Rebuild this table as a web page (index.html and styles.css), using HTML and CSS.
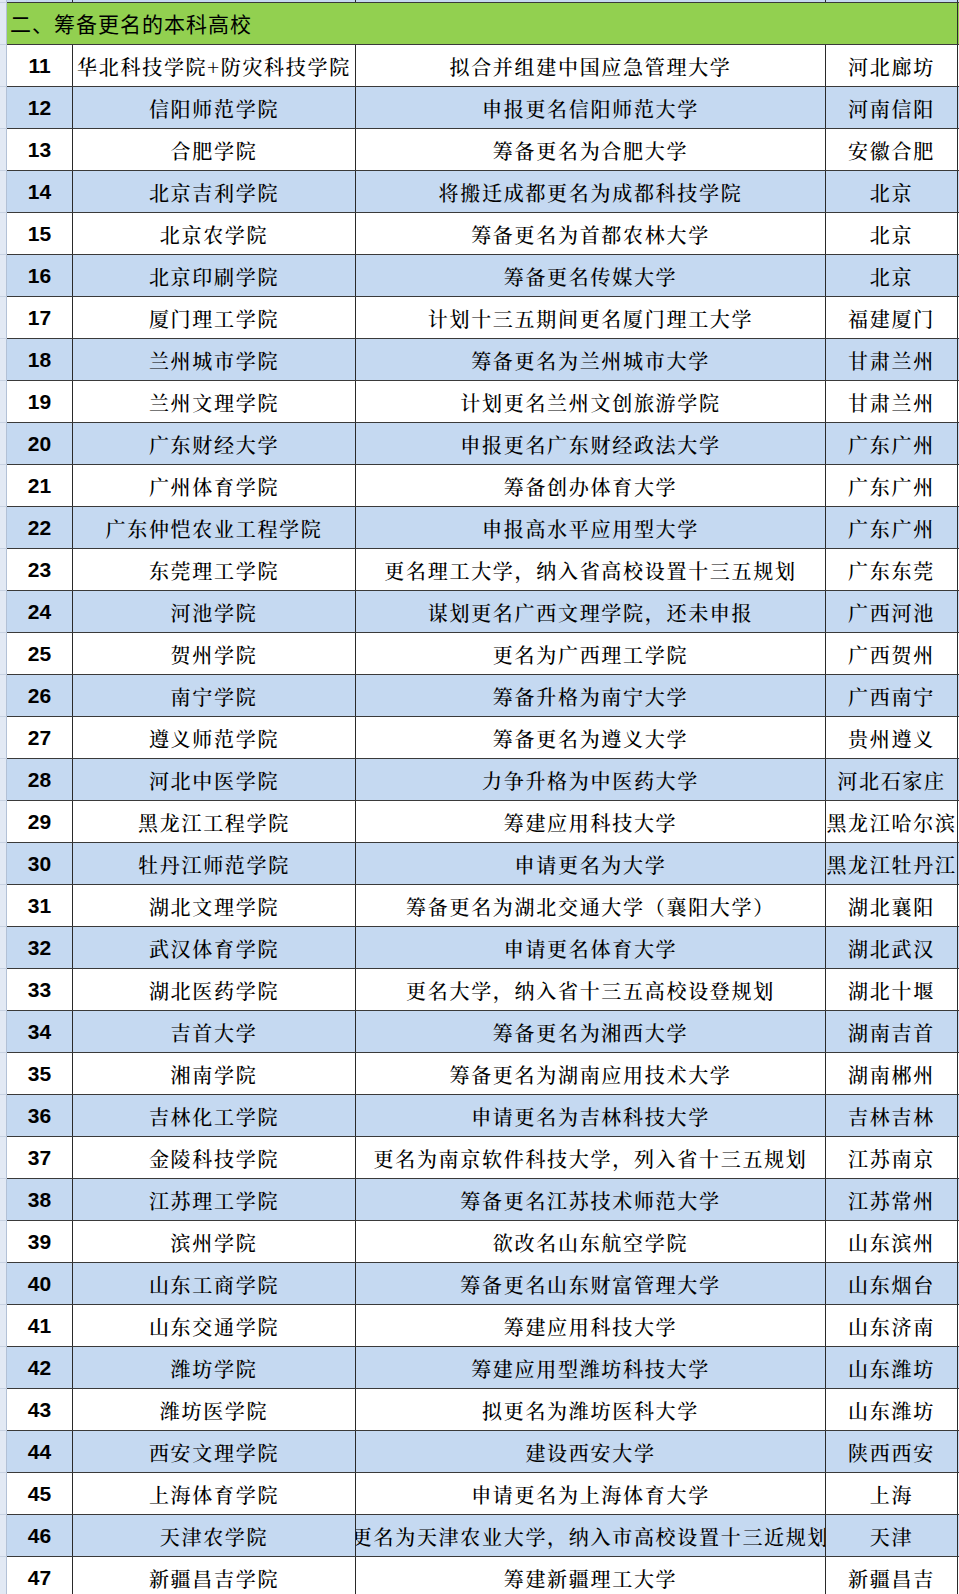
FILE: index.html
```html
<!DOCTYPE html>
<html lang="zh-CN">
<head>
<meta charset="utf-8">
<title>筹备更名的本科高校</title>
<link rel="stylesheet" href="styles.css">
</head>
<body>
<div class="sheet">
  <div class="row row-top alt">
    <div class="gutter"></div><div class="cell"></div><div class="cell"></div><div class="cell"></div><div class="cell"></div>
  </div>
  <div class="row row-head">
    <div class="gutter"></div>
    <div class="cell head-cell">二、筹备更名的本科高校</div>
  </div>

  <div class="row"><div class="gutter"></div><div class="cell num">11</div><div class="cell txt"><span>华北科技学院+防灾科技学院</span></div><div class="cell txt"><span>拟合并组建中国应急管理大学</span></div><div class="cell txt"><span>河北廊坊</span></div></div>
  <div class="row alt"><div class="gutter"></div><div class="cell num">12</div><div class="cell txt"><span>信阳师范学院</span></div><div class="cell txt"><span>申报更名信阳师范大学</span></div><div class="cell txt"><span>河南信阳</span></div></div>
  <div class="row"><div class="gutter"></div><div class="cell num">13</div><div class="cell txt"><span>合肥学院</span></div><div class="cell txt"><span>筹备更名为合肥大学</span></div><div class="cell txt"><span>安徽合肥</span></div></div>
  <div class="row alt"><div class="gutter"></div><div class="cell num">14</div><div class="cell txt"><span>北京吉利学院</span></div><div class="cell txt"><span>将搬迁成都更名为成都科技学院</span></div><div class="cell txt"><span>北京</span></div></div>
  <div class="row"><div class="gutter"></div><div class="cell num">15</div><div class="cell txt"><span>北京农学院</span></div><div class="cell txt"><span>筹备更名为首都农林大学</span></div><div class="cell txt"><span>北京</span></div></div>
  <div class="row alt"><div class="gutter"></div><div class="cell num">16</div><div class="cell txt"><span>北京印刷学院</span></div><div class="cell txt"><span>筹备更名传媒大学</span></div><div class="cell txt"><span>北京</span></div></div>
  <div class="row"><div class="gutter"></div><div class="cell num">17</div><div class="cell txt"><span>厦门理工学院</span></div><div class="cell txt"><span>计划十三五期间更名厦门理工大学</span></div><div class="cell txt"><span>福建厦门</span></div></div>
  <div class="row alt"><div class="gutter"></div><div class="cell num">18</div><div class="cell txt"><span>兰州城市学院</span></div><div class="cell txt"><span>筹备更名为兰州城市大学</span></div><div class="cell txt"><span>甘肃兰州</span></div></div>
  <div class="row"><div class="gutter"></div><div class="cell num">19</div><div class="cell txt"><span>兰州文理学院</span></div><div class="cell txt"><span>计划更名兰州文创旅游学院</span></div><div class="cell txt"><span>甘肃兰州</span></div></div>
  <div class="row alt"><div class="gutter"></div><div class="cell num">20</div><div class="cell txt"><span>广东财经大学</span></div><div class="cell txt"><span>申报更名广东财经政法大学</span></div><div class="cell txt"><span>广东广州</span></div></div>
  <div class="row"><div class="gutter"></div><div class="cell num">21</div><div class="cell txt"><span>广州体育学院</span></div><div class="cell txt"><span>筹备创办体育大学</span></div><div class="cell txt"><span>广东广州</span></div></div>
  <div class="row alt"><div class="gutter"></div><div class="cell num">22</div><div class="cell txt"><span>广东仲恺农业工程学院</span></div><div class="cell txt"><span>申报高水平应用型大学</span></div><div class="cell txt"><span>广东广州</span></div></div>
  <div class="row"><div class="gutter"></div><div class="cell num">23</div><div class="cell txt"><span>东莞理工学院</span></div><div class="cell txt"><span>更名理工大学，纳入省高校设置十三五规划</span></div><div class="cell txt"><span>广东东莞</span></div></div>
  <div class="row alt"><div class="gutter"></div><div class="cell num">24</div><div class="cell txt"><span>河池学院</span></div><div class="cell txt"><span>谋划更名广西文理学院，还未申报</span></div><div class="cell txt"><span>广西河池</span></div></div>
  <div class="row"><div class="gutter"></div><div class="cell num">25</div><div class="cell txt"><span>贺州学院</span></div><div class="cell txt"><span>更名为广西理工学院</span></div><div class="cell txt"><span>广西贺州</span></div></div>
  <div class="row alt"><div class="gutter"></div><div class="cell num">26</div><div class="cell txt"><span>南宁学院</span></div><div class="cell txt"><span>筹备升格为南宁大学</span></div><div class="cell txt"><span>广西南宁</span></div></div>
  <div class="row"><div class="gutter"></div><div class="cell num">27</div><div class="cell txt"><span>遵义师范学院</span></div><div class="cell txt"><span>筹备更名为遵义大学</span></div><div class="cell txt"><span>贵州遵义</span></div></div>
  <div class="row alt"><div class="gutter"></div><div class="cell num">28</div><div class="cell txt"><span>河北中医学院</span></div><div class="cell txt"><span>力争升格为中医药大学</span></div><div class="cell txt"><span>河北石家庄</span></div></div>
  <div class="row"><div class="gutter"></div><div class="cell num">29</div><div class="cell txt"><span>黑龙江工程学院</span></div><div class="cell txt"><span>筹建应用科技大学</span></div><div class="cell txt"><span>黑龙江哈尔滨</span></div></div>
  <div class="row alt"><div class="gutter"></div><div class="cell num">30</div><div class="cell txt"><span>牡丹江师范学院</span></div><div class="cell txt"><span>申请更名为大学</span></div><div class="cell txt"><span>黑龙江牡丹江</span></div></div>
  <div class="row"><div class="gutter"></div><div class="cell num">31</div><div class="cell txt"><span>湖北文理学院</span></div><div class="cell txt"><span>筹备更名为湖北交通大学（襄阳大学）</span></div><div class="cell txt"><span>湖北襄阳</span></div></div>
  <div class="row alt"><div class="gutter"></div><div class="cell num">32</div><div class="cell txt"><span>武汉体育学院</span></div><div class="cell txt"><span>申请更名体育大学</span></div><div class="cell txt"><span>湖北武汉</span></div></div>
  <div class="row"><div class="gutter"></div><div class="cell num">33</div><div class="cell txt"><span>湖北医药学院</span></div><div class="cell txt"><span>更名大学，纳入省十三五高校设登规划</span></div><div class="cell txt"><span>湖北十堰</span></div></div>
  <div class="row alt"><div class="gutter"></div><div class="cell num">34</div><div class="cell txt"><span>吉首大学</span></div><div class="cell txt"><span>筹备更名为湘西大学</span></div><div class="cell txt"><span>湖南吉首</span></div></div>
  <div class="row"><div class="gutter"></div><div class="cell num">35</div><div class="cell txt"><span>湘南学院</span></div><div class="cell txt"><span>筹备更名为湖南应用技术大学</span></div><div class="cell txt"><span>湖南郴州</span></div></div>
  <div class="row alt"><div class="gutter"></div><div class="cell num">36</div><div class="cell txt"><span>吉林化工学院</span></div><div class="cell txt"><span>申请更名为吉林科技大学</span></div><div class="cell txt"><span>吉林吉林</span></div></div>
  <div class="row"><div class="gutter"></div><div class="cell num">37</div><div class="cell txt"><span>金陵科技学院</span></div><div class="cell txt"><span>更名为南京软件科技大学，列入省十三五规划</span></div><div class="cell txt"><span>江苏南京</span></div></div>
  <div class="row alt"><div class="gutter"></div><div class="cell num">38</div><div class="cell txt"><span>江苏理工学院</span></div><div class="cell txt"><span>筹备更名江苏技术师范大学</span></div><div class="cell txt"><span>江苏常州</span></div></div>
  <div class="row"><div class="gutter"></div><div class="cell num">39</div><div class="cell txt"><span>滨州学院</span></div><div class="cell txt"><span>欲改名山东航空学院</span></div><div class="cell txt"><span>山东滨州</span></div></div>
  <div class="row alt"><div class="gutter"></div><div class="cell num">40</div><div class="cell txt"><span>山东工商学院</span></div><div class="cell txt"><span>筹备更名山东财富管理大学</span></div><div class="cell txt"><span>山东烟台</span></div></div>
  <div class="row"><div class="gutter"></div><div class="cell num">41</div><div class="cell txt"><span>山东交通学院</span></div><div class="cell txt"><span>筹建应用科技大学</span></div><div class="cell txt"><span>山东济南</span></div></div>
  <div class="row alt"><div class="gutter"></div><div class="cell num">42</div><div class="cell txt"><span>潍坊学院</span></div><div class="cell txt"><span>筹建应用型潍坊科技大学</span></div><div class="cell txt"><span>山东潍坊</span></div></div>
  <div class="row"><div class="gutter"></div><div class="cell num">43</div><div class="cell txt"><span>潍坊医学院</span></div><div class="cell txt"><span>拟更名为潍坊医科大学</span></div><div class="cell txt"><span>山东潍坊</span></div></div>
  <div class="row alt"><div class="gutter"></div><div class="cell num">44</div><div class="cell txt"><span>西安文理学院</span></div><div class="cell txt"><span>建设西安大学</span></div><div class="cell txt"><span>陕西西安</span></div></div>
  <div class="row"><div class="gutter"></div><div class="cell num">45</div><div class="cell txt"><span>上海体育学院</span></div><div class="cell txt"><span>申请更名为上海体育大学</span></div><div class="cell txt"><span>上海</span></div></div>
  <div class="row alt"><div class="gutter"></div><div class="cell num">46</div><div class="cell txt"><span>天津农学院</span></div><div class="cell txt"><span>更名为天津农业大学，纳入市高校设置十三近规划</span></div><div class="cell txt"><span>天津</span></div></div>
  <div class="row"><div class="gutter"></div><div class="cell num">47</div><div class="cell txt"><span>新疆昌吉学院</span></div><div class="cell txt"><span>筹建新疆理工大学</span></div><div class="cell txt"><span>新疆昌吉</span></div></div>
</div>
</body>
</html>
```
FILE: styles.css
```css
html, body {
  margin: 0;
  padding: 0;
  background: #ffffff;
  overflow: hidden;
}

body {
  height: 100vh;
  font-family: "Noto Serif CJK SC", "Noto Sans CJK SC", serif;
  color: #000000;
}

.sheet {
  display: flex;
  flex-direction: column;
  width: 959px;
}

.row {
  display: grid;
  grid-template-columns: 7px 66px 283px 470px 132px;
  height: 42px;
  box-sizing: border-box;
  border-bottom: 1px solid #3a3a3a;
  background: #ffffff;
  flex: none;
}

.row.alt {
  background: #c5d9f1;
}

.row-top {
  height: 3px;
}

.gutter {
  background: #e2e9f4;
  border-right: 1px solid #b3c1d6;
  box-sizing: border-box;
  margin-bottom: -1px;
  border-bottom: 1px solid #c8d2e2;
}

.cell {
  box-sizing: border-box;
  border-right: 1px solid #2a2a2a;
  overflow: hidden;
  min-width: 0;
}

.num {
  display: flex;
  align-items: center;
  justify-content: center;
  font-family: "Liberation Sans", Arial, sans-serif;
  font-weight: bold;
  font-size: 21px;
  padding-top: 1px;
}

.txt {
  display: flex;
  align-items: center;
  justify-content: center;
  font-size: 20px;
  font-weight: 500;
  letter-spacing: 1.7px;
  padding-top: 2px;
}

.txt span {
  white-space: nowrap;
  flex: none;
}

.row-head {
  background: #92d050;
}

.head-cell {
  grid-column: 2 / 6;
  display: flex;
  align-items: center;
  padding-left: 3px;
  padding-bottom: 1px;
  font-family: "Noto Sans CJK SC", "Microsoft YaHei", sans-serif;
  font-size: 21px;
  letter-spacing: 1px;
}
```
